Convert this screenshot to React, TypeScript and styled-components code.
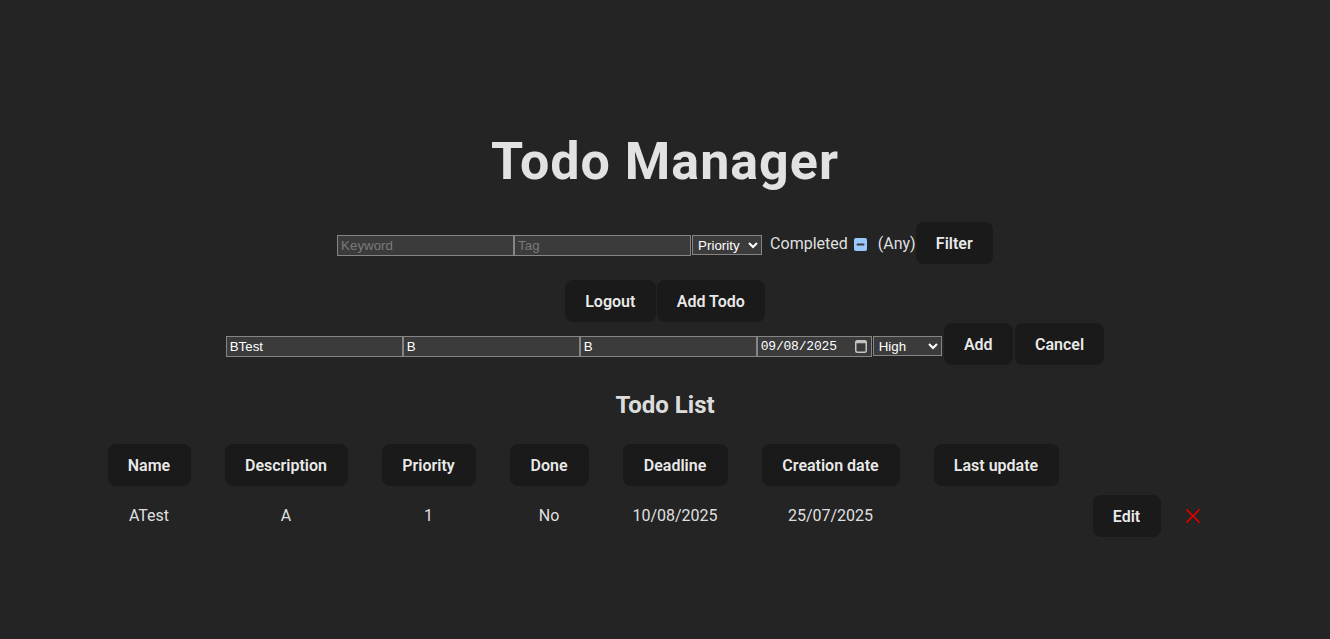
import React, { useEffect, useRef } from "react";
import styled, { createGlobalStyle } from "styled-components";

const GlobalStyle = createGlobalStyle`
  :root { color-scheme: dark; }
  html, body { margin: 0; padding: 0; }
  body {
    background: #242424;
    color: rgba(255, 255, 255, 0.87);
    font-family: Roboto, "Noto Sans", Arial, sans-serif;
    font-size: 16px;
    line-height: 1.5;
    -webkit-font-smoothing: antialiased;
  }
`;

const Page = styled.main`
  display: flex;
  flex-direction: column;
  align-items: center;
  padding-top: 134px;
  min-height: 100vh;
  box-sizing: border-box;
`;

const Title = styled.h1`
  margin: 0 0 32px;
  font-size: 52px;
  line-height: 56px;
  letter-spacing: 1px;
  font-weight: 700;
  color: rgba(255, 255, 255, 0.87);
`;

const Row = styled.div<{ $mb?: number; $inputTop?: number }>`
  display: flex;
  align-items: center;
  height: 42px;
  margin-bottom: ${(p) => p.$mb ?? 0}px;
`;

const ButtonRow = styled.div`
  display: flex;
  gap: 1px;
  margin-bottom: 1px;
`;

const Button = styled.button<{ $w?: number }>`
  box-sizing: border-box;
  height: 42px;
  ${(p) => (p.$w ? `width: ${p.$w}px; padding: 0;` : "padding: 0 19.2px;")}
  margin: 0;
  border: 1px solid transparent;
  border-radius: 8px;
  background: #1a1a1a;
  color: rgba(255, 255, 255, 0.92);
  font-family: Roboto, "Noto Sans", Arial, sans-serif;
  font-size: 16px;
  font-weight: 600;
  line-height: 21px;
  cursor: pointer;
  white-space: nowrap;
`;

const GapButton = styled(Button)`
  margin-left: 2px;
`;

const TextInput = styled.input<{ $w?: number }>`
  box-sizing: border-box;
  width: ${(p) => p.$w ?? 177}px;
  height: 21px;
  margin: 4px 0 0;
  padding: 1px 3px;
  border: 1px solid #858585;
  border-radius: 0;
  background: #3b3b3b;
  color: #ffffff;
  font-family: "Liberation Sans", Arial, sans-serif;
  font-size: 13.33px;
  outline: none;
  &::placeholder {
    color: #7a7a7a;
  }
`;

const Select = styled.select<{ $w: number }>`
  box-sizing: border-box;
  width: ${(p) => p.$w}px;
  height: 20px;
  margin: 4px 0 0 1px;
  padding: 0 0 0 1px;
  border: 1px solid #858585;
  border-radius: 0;
  background: #3b3b3b;
  color: #ffffff;
  font-family: "Liberation Sans", Arial, sans-serif;
  font-size: 13.33px;
  font-weight: 400;
`;

const FilterLabel = styled.label`
  display: flex;
  align-items: center;
  margin-left: 8px;
  margin-top: 2px;
  font-size: 16px;
  color: rgba(255, 255, 255, 0.87);
`;

const Check = styled.input`
  width: 13px;
  height: 13px;
  margin: 0 11px 0 6px;
`;

const DateBox = styled.label`
  box-sizing: border-box;
  display: flex;
  align-items: center;
  width: 115px;
  height: 21px;
  margin-top: 4px;
  padding: 0 4px 0 3px;
  border: 1px solid #858585;
  background: #3b3b3b;
`;

const DateText = styled.input`
  flex: 1;
  min-width: 0;
  padding: 0;
  border: 0;
  background: transparent;
  color: #ffffff;
  font-family: "Liberation Mono", "DejaVu Sans Mono", monospace;
  font-size: 13px;
  letter-spacing: -0.2px;
  outline: none;
`;

const SubTitle = styled.h2`
  margin: 22px 0 18px;
  font-size: 24px;
  line-height: 36px;
  font-weight: 700;
  color: rgba(255, 255, 255, 0.87);
`;

const Table = styled.table`
  border-spacing: 2px;
  border-collapse: separate;
  margin-right: 2px;
`;

const HeadCell = styled.th`
  padding: 1px 16px;
`;

const Cell = styled.td`
  padding: 6px 16px;
  text-align: center;
  vertical-align: middle;
  font-size: 16px;
  line-height: 24px;
  color: rgba(255, 255, 255, 0.87);
`;

const Actions = styled.div`
  display: flex;
  align-items: center;
  gap: 4px;
`;

const DeleteButton = styled.button`
  display: flex;
  align-items: center;
  justify-content: center;
  box-sizing: border-box;
  width: 56px;
  height: 42px;
  padding: 0;
  border: 1px solid transparent;
  border-radius: 8px;
  background: transparent;
  cursor: pointer;
`;

const CalendarIcon = () => (
  <svg width="12" height="14" viewBox="0 0 12 14" aria-hidden="true">
    <rect x="0.75" y="1.75" width="10.5" height="11.5" rx="1.5" fill="none" stroke="#c4c4c4" strokeWidth="1.5" />
    <rect x="0.75" y="1.75" width="10.5" height="2.5" fill="#c4c4c4" />
  </svg>
);

const CrossIcon = () => (
  <svg width="14" height="14" viewBox="0 0 14 14" aria-hidden="true">
    <path d="M1 1 L13 13 M13 1 L1 13" stroke="#e00000" strokeWidth="1.7" strokeLinecap="square" />
  </svg>
);

const columns: { label: string; w: number }[] = [
  { label: "Name", w: 83 },
  { label: "Description", w: 123 },
  { label: "Priority", w: 94 },
  { label: "Done", w: 79 },
  { label: "Deadline", w: 105 },
  { label: "Creation date", w: 138 },
  { label: "Last update", w: 125 },
];

const todos = [
  {
    name: "ATest",
    description: "A",
    priority: "1",
    done: "No",
    deadline: "10/08/2025",
    created: "25/07/2025",
    updated: "",
  },
];

export default function App() {
  const checkRef = useRef<HTMLInputElement>(null);
  useEffect(() => {
    if (checkRef.current) checkRef.current.indeterminate = true;
  }, []);

  return (
    <>
      <GlobalStyle />
      <Page>
        <Title>Todo Manager</Title>

        <Row $mb={16}>
          <TextInput placeholder="Keyword" />
          <TextInput placeholder="Tag" />
          <Select $w={70} defaultValue="">
            <option value="">Priority</option>
            <option value="1">1</option>
            <option value="2">2</option>
            <option value="3">3</option>
          </Select>
          <FilterLabel>
            Completed
            <Check ref={checkRef} type="checkbox" />
            (Any)
          </FilterLabel>
          <Button>Filter</Button>
        </Row>

        <ButtonRow>
          <Button>Logout</Button>
          <Button>Add Todo</Button>
        </ButtonRow>

        <Row>
          <TextInput defaultValue="BTest" />
          <TextInput defaultValue="B" />
          <TextInput defaultValue="B" />
          <DateBox>
            <DateText defaultValue="09/08/2025" />
            <CalendarIcon />
          </DateBox>
          <Select $w={69} defaultValue="High">
            <option>Low</option>
            <option>Medium</option>
            <option>High</option>
          </Select>
          <GapButton>Add</GapButton>
          <GapButton>Cancel</GapButton>
        </Row>

        <SubTitle>Todo List</SubTitle>

        <Table>
          <thead>
            <tr>
              {columns.map((c) => (
                <HeadCell key={c.label}>
                  <Button $w={c.w}>{c.label}</Button>
                </HeadCell>
              ))}
              <HeadCell />
            </tr>
          </thead>
          <tbody>
            {todos.map((t) => (
              <tr key={t.name}>
                <Cell>{t.name}</Cell>
                <Cell>{t.description}</Cell>
                <Cell>{t.priority}</Cell>
                <Cell>{t.done}</Cell>
                <Cell>{t.deadline}</Cell>
                <Cell>{t.created}</Cell>
                <Cell>{t.updated}</Cell>
                <Cell>
                  <Actions>
                    <Button $w={68}>Edit</Button>
                    <DeleteButton aria-label="Delete">
                      <CrossIcon />
                    </DeleteButton>
                  </Actions>
                </Cell>
              </tr>
            ))}
          </tbody>
        </Table>
      </Page>
    </>
  );
}
